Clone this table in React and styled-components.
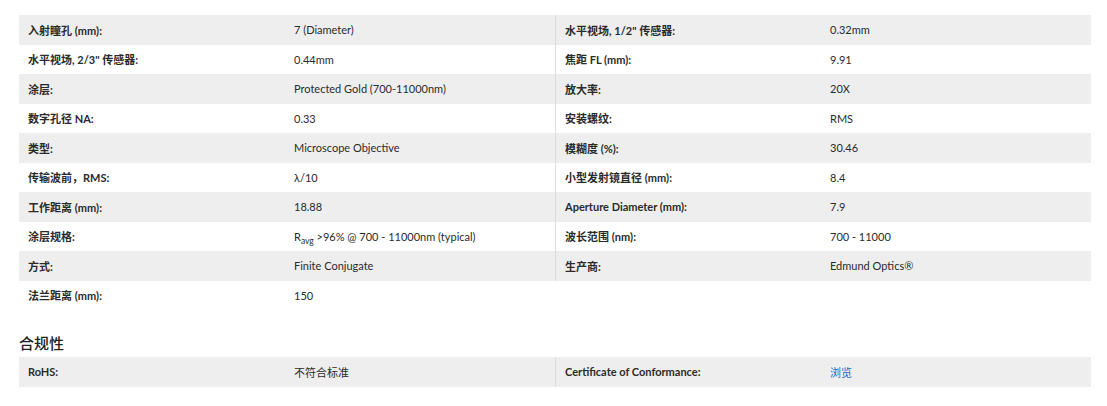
import styled, { createGlobalStyle } from 'styled-components';

const GlobalStyle = createGlobalStyle`
  body {
    margin: 0;
    background: #ffffff;
    font-family: 'Lato', 'Noto Sans CJK SC', sans-serif;
    color: #2b2b2b;
  }
`;

const Page = styled.div`
  padding: 15px 16px 0 19px;
  width: 1072px;
`;

const SpecTable = styled.div`
  display: grid;
  grid-template-columns: 266px 270px 266px 270px;
  grid-auto-rows: 29.5px;
`;

const Cell = styled.div`
  display: flex;
  align-items: center;
  padding: 0 9px;
  font-size: 11px;
  font-weight: ${p => (p.$label ? 700 : 400)};
  background: ${p => (p.$shade ? '#eeeeee' : '#ffffff')};
  border-left: ${p => (p.$divider ? '1px solid #dcdcdc' : 'none')};
  white-space: nowrap;
`;

const Sub = styled.sub`
  font-size: 8.5px;
  vertical-align: -3px;
  line-height: 0;
`;

const Heading = styled.h3`
  margin: 23px 0 4px 0;
  font-size: 15px;
  line-height: 20px;
  font-weight: 500;
  color: #222222;
`;

const Link = styled.a`
  color: #1f66c6;
  text-decoration: none;
`;

const specs = [
  ['入射瞳孔 (mm):', '7 (Diameter)', '水平视场, 1/2" 传感器:', '0.32mm'],
  ['水平视场, 2/3" 传感器:', '0.44mm', '焦距 FL (mm):', '9.91'],
  ['涂层:', 'Protected Gold (700-11000nm)', '放大率:', '20X'],
  ['数字孔径 NA:', '0.33', '安装螺纹:', 'RMS'],
  ['类型:', 'Microscope Objective', '模糊度 (%):', '30.46'],
  ['传输波前，RMS:', 'λ/10', '小型发射镜直径 (mm):', '8.4'],
  ['工作距离 (mm):', '18.88', 'Aperture Diameter (mm):', '7.9'],
  ['涂层规格:', <>R<Sub>avg</Sub> &gt;96% @ 700 - 11000nm (typical)</>, '波长范围 (nm):', '700 - 11000'],
  ['方式:', 'Finite Conjugate', '生产商:', 'Edmund Optics®'],
  ['法兰距离 (mm):', '150'],
];

function SpecRows({ rows }) {
  return rows.map((row, i) => {
    const shade = i % 2 === 0;
    return [
      <Cell key={`${i}a`} $label $shade={shade}><span>{row[0]}</span></Cell>,
      <Cell key={`${i}b`} $shade={shade}><span>{row[1]}</span></Cell>,
      row[2] !== undefined && (
        <Cell key={`${i}c`} $label $shade={shade} $divider><span>{row[2]}</span></Cell>
      ),
      row[3] !== undefined && (
        <Cell key={`${i}d`} $shade={shade}><span>{row[3]}</span></Cell>
      ),
    ];
  });
}

export default function App() {
  return (
    <>
      <GlobalStyle />
      <Page>
        <SpecTable>
          <SpecRows rows={specs} />
        </SpecTable>

        <Heading>合规性</Heading>
        <SpecTable>
          <SpecRows
            rows={[['RoHS:', '不符合标准', 'Certificate of Conformance:', <Link href="#">浏览</Link>]]}
          />
        </SpecTable>
      </Page>
    </>
  );
}
